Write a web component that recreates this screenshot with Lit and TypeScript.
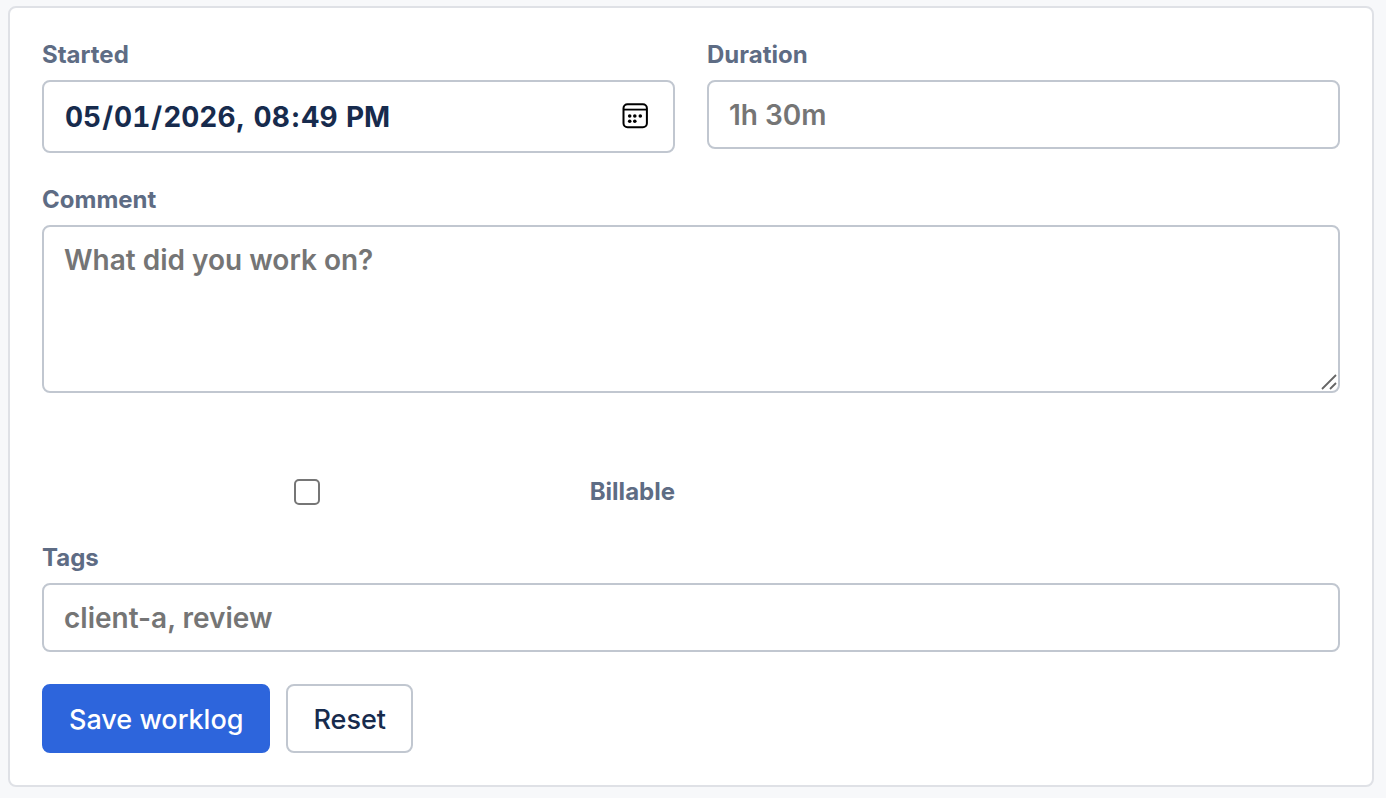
import { LitElement, html, css } from "lit";
import { customElement } from "lit/decorators.js";

@customElement("app-root")
export class AppRoot extends LitElement {
  static styles = css`
    :host {
      display: block;
      box-sizing: border-box;
      min-height: 100vh;
      padding: 6px 12px 11px 8px;
      background: #f7f8fa;
      color: #172b4d;
      font-family: Inter, Roboto, sans-serif;
    }
    *,
    *::before,
    *::after {
      box-sizing: border-box;
    }
    .card {
      display: grid;
      grid-template-columns: 1fr 1fr;
      align-items: start;
      gap: 32px;
      padding: 32px;
      border: 2px solid #dfe1e6;
      border-radius: 8px;
      background: #ffffff;
    }
    .field {
      display: grid;
      gap: 10px;
      min-width: 0;
    }
    .wide {
      grid-column: 1 / -1;
    }
    .label {
      color: #5e6c84;
      font-size: 24px;
      font-weight: 650;
      line-height: 30px;
    }
    .box {
      position: relative;
      display: grid;
    }
    .control {
      display: block;
      width: 100%;
      min-width: 0;
      margin: 0;
      padding: 16px 20px;
      border: 2px solid #c1c7d0;
      border-radius: 8px;
      background: #ffffff;
      color: #172b4d;
      font: 600 28px/33px Inter, Roboto, sans-serif;
    }
    .control::placeholder {
      color: #757575;
      opacity: 1;
    }
    .date {
      padding: 19px 20px 17px;
      font-weight: 650;
      font-variant-numeric: tabular-nums;
    }
    .date::-webkit-datetime-edit-hour-field,
    .date::-webkit-datetime-edit-minute-field,
    .date::-webkit-datetime-edit-ampm-field {
      padding: 0 2px;
    }
    .date::-webkit-calendar-picker-indicator {
      width: 28px;
      height: 28px;
      padding: 0;
      opacity: 0;
    }
    .date {
      height: 73px;
    }
    .line {
      height: 69px;
    }
    .area {
      height: 168px;
      padding-top: 17px;
      resize: none;
    }
    .calendar {
      position: absolute;
      top: 22px;
      right: 26px;
      width: 28px;
      height: 28px;
      pointer-events: none;
    }
    .grip {
      position: absolute;
      right: 2px;
      bottom: 2px;
      width: 18px;
      height: 18px;
      pointer-events: none;
    }
    .check {
      display: flex;
      align-items: center;
      gap: 18px;
      padding-top: 48px;
      min-height: 86px;
    }
    .slot {
      display: flex;
      flex: 1;
      justify-content: center;
    }
    .tick {
      appearance: none;
      width: 26px;
      height: 26px;
      margin: 0;
      border: 2px solid #767676;
      border-radius: 5px;
      background: #ffffff;
    }
    .tick:checked {
      border-color: #2d65dc;
      background: #2d65dc;
    }
    .actions {
      display: flex;
      gap: 16px;
    }
    .button {
      height: 69px;
      padding: 2px 25px 0;
      border: 2px solid #c1c7d0;
      border-radius: 8px;
      background: #ffffff;
      color: #172b4d;
      font: 550 27px/33px Inter, Roboto, sans-serif;
      cursor: pointer;
    }
    .primary {
      border-color: #2d65dc;
      background: #2d65dc;
      color: #ffffff;
    }
  `;

  render() {
    return html`
      <form class="card" @submit=${(e: Event) => e.preventDefault()}>
        <div class="field">
          <label class="label" for="started">Started</label>
          <div class="box">
            <input class="control date" id="started" type="datetime-local" value="2026-05-01T20:49" />
            <svg class="calendar" viewBox="0 0 28 28" aria-hidden="true">
              <rect x="2.5" y="2.2" width="23.4" height="23" rx="4" fill="none" stroke="#000" stroke-width="2" />
              <path d="M2.5 7.6H26" stroke="#000" stroke-width="1.8" />
              <g fill="#000">
                <circle cx="8.7" cy="14" r="1.8" />
                <circle cx="13.8" cy="14" r="1.8" />
                <circle cx="19.3" cy="14" r="1.8" />
                <circle cx="8.7" cy="19.3" r="1.8" />
                <circle cx="13.8" cy="19.3" r="1.8" />
              </g>
            </svg>
          </div>
        </div>
        <div class="field">
          <label class="label" for="duration">Duration</label>
          <input class="control line" id="duration" type="text" placeholder="1h 30m" />
        </div>
        <div class="field wide">
          <label class="label" for="comment">Comment</label>
          <div class="box">
            <textarea class="control area" id="comment" placeholder="What did you work on?"></textarea>
            <svg class="grip" viewBox="0 0 18 18" aria-hidden="true">
              <path d="M2 16L16 2M10 16L16 10" stroke="#666" stroke-width="1.8" />
            </svg>
          </div>
        </div>
        <label class="label check">
          <span class="slot"><input class="tick" type="checkbox" /></span>
          <span>Billable</span>
        </label>
        <div class="field wide">
          <label class="label" for="tags">Tags</label>
          <input class="control line" id="tags" type="text" placeholder="client-a, review" />
        </div>
        <div class="actions wide">
          <button class="button primary" type="submit">Save worklog</button>
          <button class="button" type="reset">Reset</button>
        </div>
      </form>
    `;
  }
}
